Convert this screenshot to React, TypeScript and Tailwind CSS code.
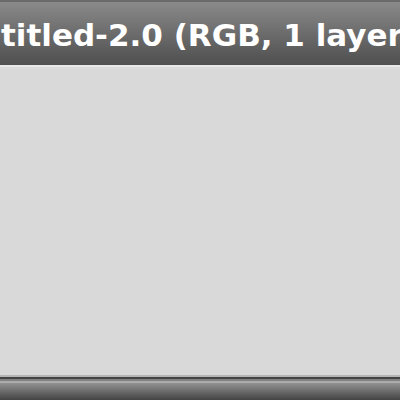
export default function App() {
  return (
    <div className="flex h-[400px] w-[400px] flex-col overflow-hidden bg-[#d9d9d9]">
      {/* window title bar */}
      <div className="flex h-[65px] shrink-0 flex-col bg-gradient-to-b from-[#8c8c8c] to-[#4f4f4f]">
        <div className="h-[2px] bg-[#6a6a6a]" />
        <div
          className="overflow-hidden whitespace-nowrap pl-[1px] pt-[15px] text-[31px] font-bold leading-[36px] text-white"
          style={{ fontFamily: '"DejaVu Sans", sans-serif' }}
        >
          titled-2.0 (RGB, 1 layer) 400x400 – GIMP
        </div>
      </div>
      <div className="h-[2px] shrink-0 bg-[#e6e6e6]" />
      {/* canvas area */}
      <div className="flex-1 bg-[#d9d9d9]" />
      {/* bottom frame */}
      <div className="h-[2px] shrink-0 bg-[#b5b5b5]" />
      <div className="h-[2px] shrink-0 bg-[#444444]" />
      <div className="h-[2px] shrink-0 bg-[#808080]" />
      <div className="h-[2px] shrink-0 bg-[#ababab]" />
      <div className="h-[17px] shrink-0 bg-gradient-to-b from-[#929292] to-[#444444]" />
    </div>
  );
}
